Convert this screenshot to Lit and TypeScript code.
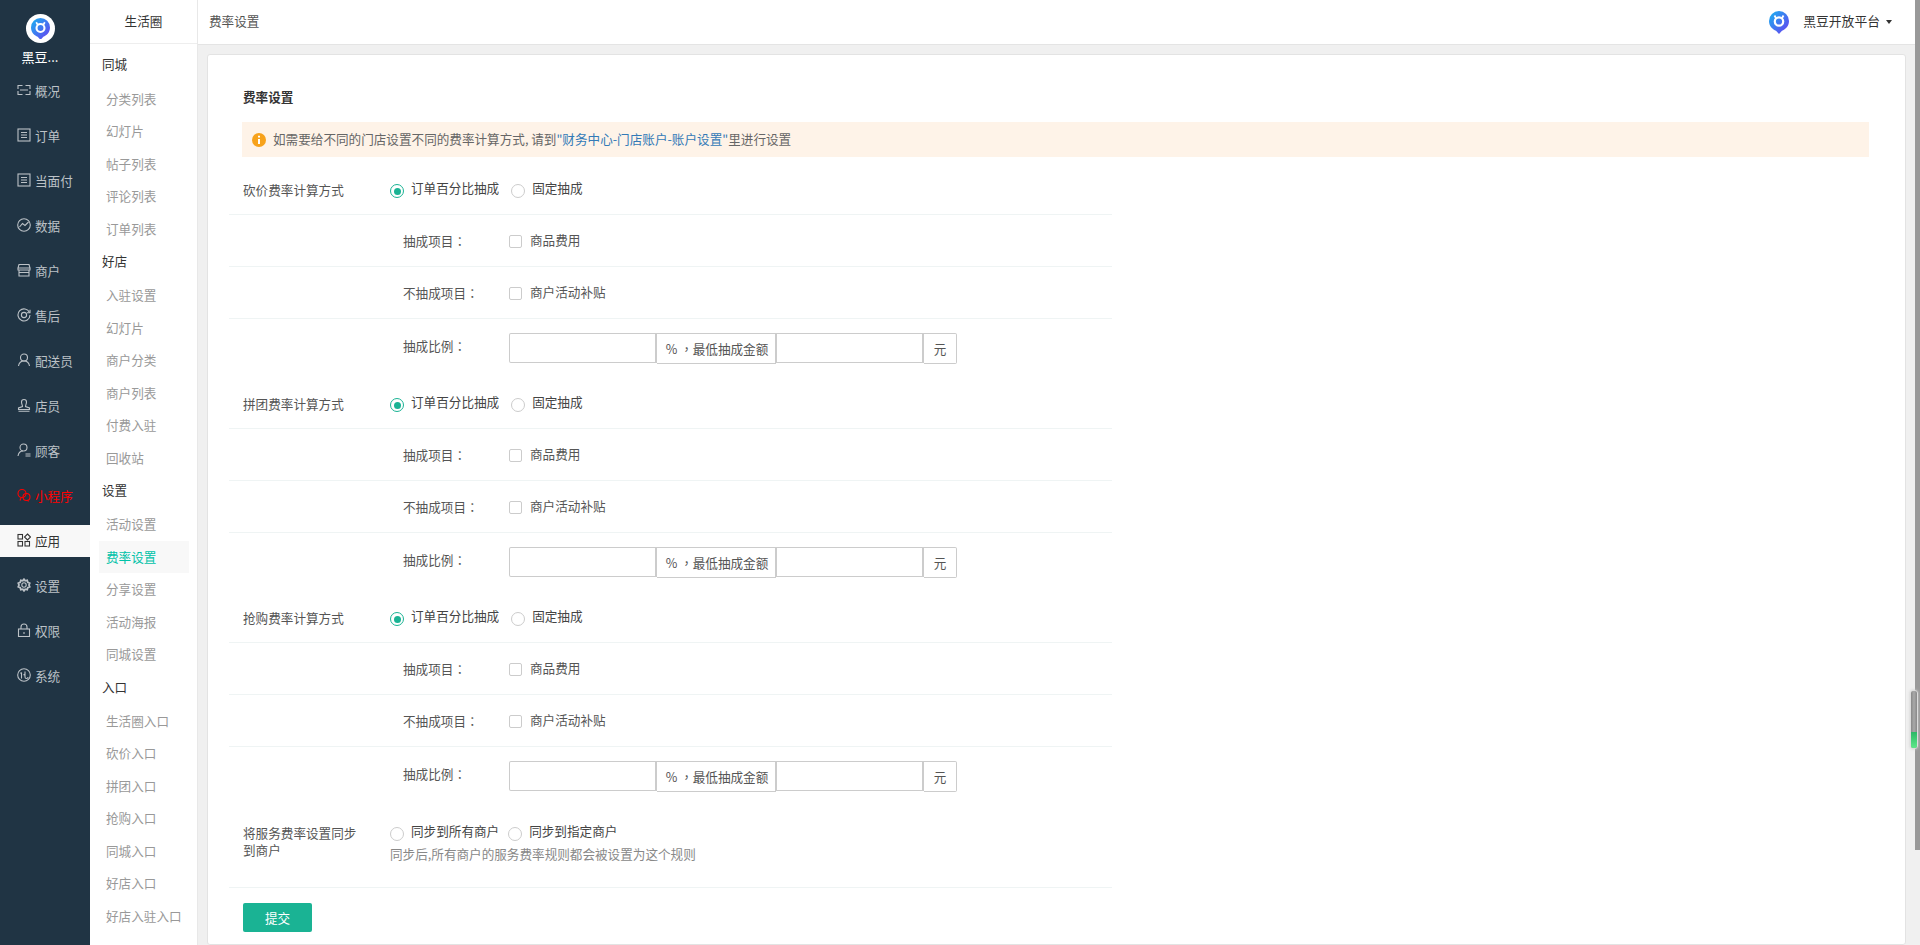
import { LitElement, html, css, svg } from "lit";
import { customElement } from "lit/decorators.js";

const logo = (size: number, id: string) => html`<svg width=${size} height=${size * 1.15} viewBox="0 0 20 23">
  <defs><linearGradient id=${id} x1="0" y1="0" x2="1" y2="1"><stop offset="0" stop-color="#18b4f0"/><stop offset="1" stop-color="#6a3cf0"/></linearGradient></defs>
  <path d="M10 0a10 10 0 0 1 10 10c0 5.4-4 8.600-7 9.800L10 23l-3-3.200C4 18.600 0 15.400 0 10A10 10 0 0 1 10 0z" fill="url(#${id})"/>
  <circle cx="10" cy="10.500" r="4.200" fill="none" stroke="#fff" stroke-width="2.200"/>
  <path d="M5.500 4.500l1.700 3M14.500 4.500l-1.700 3" stroke="#fff" stroke-width="1.800" fill="none"/>
</svg>`;

const ic: Record<string, unknown> = {
  overview: svg`<path d="M1 6V2.500h4.500M8.500 2.500H13V6M1 8v3.500h4.500M8.500 11.500H13V8M3 7h8"/>`,
  list: svg`<rect x="1" y="1" width="12" height="12"/><path d="M4 4.500h6M4 7h6M4 9.500h6"/>`,
  chart: svg`<circle cx="7" cy="7" r="6.300"/><path d="M2.500 9l3-3.500 2.500 2 3.500-3.500"/>`,
  store: svg`<path d="M2 1.500h10l1 3.500H1zM1 5h12v2H1zM2 7v6h10V7M2 9.500h10"/>`,
  after: svg`<path d="M12.500 4.500A6 6 0 1 0 13 7"/><circle cx="7" cy="7" r="2.600"/><path d="M13 1.800v3h-3"/>`,
  person: svg`<circle cx="7" cy="4.500" r="3.500"/><path d="M1.500 13c.5-3 2.500-5 5.500-5s5 2 5.500 5"/>`,
  staff: svg`<path d="M4.500 4a2.500 2.500 0 0 1 5 0c0 2-1 3-1 4.500l4 1.500v1.500h-11V10l4-1.500C5.500 7 4.500 6 4.500 4zM1.500 13.300h11"/>`,
  customer: svg`<circle cx="6.500" cy="4.500" r="3.500"/><path d="M1 13c.5-3 2.500-5 5-5M8.500 11h5M8.500 13h5"/>`,
  mini: svg`<circle cx="5" cy="5.500" r="4"/><circle cx="9.500" cy="9" r="3.500"/><path d="M3 12.500l1-2.500M11.500 13.500l-1-1.500"/>`,
  apps: svg`<rect x="1" y="1.500" width="4.500" height="4.500"/><path d="M10.500 1l3 3-3 3-3-3z"/><rect x="1" y="8.500" width="4.500" height="4.500"/><rect x="8" y="8.500" width="4.500" height="4.500"/>`,
  gear: svg`<circle cx="7" cy="7" r="2.200"/><path stroke-width="1.800" d="M7 1.200l1.200 1.600 2-.4.600 2 1.900.8-.7 1.800.7 1.800-1.900.8-.6 2-2-.4L7 12.800l-1.200-1.600-2 .4-.6-2-1.900-.8.700-1.800-.7-1.800 1.900-.8.600-2 2 .4z"/>`,
  lock: svg`<rect x="1.500" y="6" width="11" height="7.500"/><path d="M4 6V4a3 3 0 0 1 6 0v2M7 9v2"/>`,
  sys: svg`<circle cx="7" cy="7" r="6.300"/><path d="M4.500 4.500v6M3.500 5.500l1-1M8 3.500v5.500a1.500 1.500 0 0 0 3 0M8 6l-1.500 1"/>`,
};

const nav: [string, string, string?][] = [
  ["概况", "overview"], ["订单", "list"], ["当面付", "list"], ["数据", "chart"], ["商户", "store"],
  ["售后", "after"], ["配送员", "person"], ["店员", "staff"], ["顾客", "customer"],
  ["小程序", "mini", "red"], ["应用", "apps", "active"], ["设置", "gear"], ["权限", "lock"], ["系统", "sys"],
];

const sub: [string, string[]][] = [
  ["同城", ["分类列表", "幻灯片", "帖子列表", "评论列表", "订单列表"]],
  ["好店", ["入驻设置", "幻灯片", "商户分类", "商户列表", "付费入驻", "回收站"]],
  ["设置", ["活动设置", "费率设置", "分享设置", "活动海报", "同城设置"]],
  ["入口", ["生活圈入口", "砍价入口", "拼团入口", "抢购入口", "同城入口", "好店入口", "好店入驻入口"]],
];

@customElement("app-root")
export class AppRoot extends LitElement {
  static styles = css`
    :host { display: flex; height: 945px; overflow: hidden; position: relative; background: #f0f0f0;
      font-family: "Noto Sans CJK SC", "Liberation Sans", sans-serif; font-size: 12.600px; color: #555; }
    * { box-sizing: border-box; }
    .p { font-family: "Noto Sans CJK TC", sans-serif; }
    .side { width: 90px; flex: none; background: #203444; display: flex; flex-direction: column; align-items: stretch; }
    .brand { height: 75px; display: flex; flex-direction: column; align-items: center; padding: 14px 10px 0 0; }
    .brand-logo { width: 29px; height: 29px; border-radius: 50%; background: #fff; display: flex; align-items: center; justify-content: center; }
    .brand-name { color: #fff; margin-top: 5px; line-height: 18px; font-size: 13px; white-space: nowrap; }
    .nav { height: 32px; margin-bottom: 13px; display: flex; align-items: center; padding: 0 0 2px 17px; gap: 4px; color: #bcc2c7; white-space: nowrap; }
    .nav svg { width: 14px; height: 14px; flex: none; fill: none; stroke: currentColor; stroke-width: 1.100; }
    .nav.red { color: #f00; }
    .nav.active { background: #f8f8f8; color: #333; }
    .subnav { width: 108px; flex: none; background: #fff; border-right: 1px solid #e8e8e8; }
    .subtitle { height: 44px; line-height: 42px; text-align: center; color: #333; border-bottom: 1px solid #eee; }
    .list { padding-top: 3.500px; }
    .head { height: 34px; line-height: 32px; padding-left: 12px; color: #333; }
    .head:first-child { margin-bottom: 1px; }
    .item { width: 90px; margin-left: 9px; height: 32.500px; line-height: 31px; padding-left: 7px; color: #999; white-space: nowrap; }
    .item.on { color: #00c2a8; background: #f8f8f8; }
    .main { flex: 1; min-width: 0; display: flex; flex-direction: column; }
    .top { height: 45px; flex: none; background: #fff; border-bottom: 1px solid #e4e4e4; display: flex; align-items: center; padding: 0 23px 0 11px; color: #555; }
    .top .crumb { flex: 1; padding-bottom: 4px; }
    .top .user { color: #333; margin-left: 14px; font-size: 12.800px; padding-bottom: 4px; }
    .caret { width: 0; height: 0; border: 3.500px solid transparent; border-top: 4px solid #333; border-bottom: 0; margin-left: 6px; }
    .card { margin: 9px 9px 0 9px; flex: 1; background: #fff; border: 1px solid #e3e3e3; border-radius: 3px; padding: 0 0 0 21px; }
    .title { font-weight: 700; color: #333; margin: 32px 0 0 14px; height: 20px; line-height: 20px; }
    .alert { margin: 15px 36px 0 13px; height: 35px; background: #fef3e8; display: flex; align-items: center; padding-left: 10px; color: #666; gap: 7px; }
    .alert div { padding-bottom: 2px; }
    .alert a { color: #337ab7; }
    .form { width: 883px; margin-top: 8px; }
    .row { display: flex; border-bottom: 1px solid #eff4f4; padding-left: 14px; }
    .row.radio { height: 50px; align-items: center; }
    .row.sub { height: 52px; align-items: center; }
    .row.input { height: 60px; padding-top: 14px; border: 0; }
    .row.input .slabel { padding-top: 3px; }
    .label { width: 147px; flex: none; color: #555; line-height: 16px; }
    .slabel { width: 106px; margin-left: 160px; flex: none; color: #555; }
    .opt { display: inline-flex; align-items: center; }
    .dot { width: 14px; height: 14px; border-radius: 50%; border: 1px solid #ccc; flex: none; margin-top: 3px; background: #fff; }
    .dot.on { border-color: #1ab394; position: relative; }
    .dot.on::after { content: ""; position: absolute; left: 2.500px; top: 2.500px; width: 7px; height: 7px; border-radius: 50%; background: #1ab394; }
    .opt span { margin: -5px 12px 0 7px; color: #444; }
    .sync .opt span { margin-right: 9px; }
    .box { width: 13px; height: 13px; border: 1px solid #ccc; border-radius: 2px; margin: 4px 8px 0 0; flex: none; }
    .chk { display: flex; align-items: center; color: #555; padding-bottom: 2px; }
    .group { display: flex; height: 31px; }
    .in { height: 30px; width: 148px; border: 1px solid #ccc; border-right-width: 2px; border-radius: 2px 0 0 2px; background: #fff; }
    .in.two { border-radius: 0; }
    .add { height: 31px; border: 1px solid #ccc; border-left: 0; display: flex; align-items: center; justify-content: center; color: #555; white-space: nowrap; }
    .add.a { width: 119px; padding-left: 2px; }
    .add.b { width: 33px; border-radius: 0 2px 2px 0; }
    .sync { height: 81px; display: flex; padding: 17px 0 0 14px; border-bottom: 1px solid #eff4f4; }
    .sync .label { width: 147px; padding-right: 30px; line-height: 17px; }
    .help { color: #888; margin-top: 0; line-height: 18px; }
    .btn { margin: 15px 0 0 14px; width: 69px; height: 29px; background: #1ab394; border-radius: 2px; color: #fff; display: flex; align-items: center; justify-content: center; }
    .bar { width: 5px; flex: none; }
    .thumb { height: 850px; background: #999; }
    .widget { position: absolute; left: 1910px; top: 690px; width: 8px; height: 59px; border: 1px solid #ddd; border-radius: 3px; background: linear-gradient(90deg, #888, #aaa 50%, #888); overflow: hidden; box-shadow: 0 0 3px #ccc; }
    .widget i { position: absolute; left: 0; right: 0; bottom: 0; height: 16px; background: linear-gradient(#2cb866, #5fe88a); }
  `;

  section(name: string) {
    return html`
      <div class="row radio">
        <div class="label">${name}费率计算方式</div>
        <label class="opt"><i class="dot on"></i><span>订单百分比抽成</span></label>
        <label class="opt"><i class="dot"></i><span>固定抽成</span></label>
      </div>
      <div class="row sub"><div class="slabel">抽成项目<span class="p">：</span></div><div class="chk"><i class="box"></i>商品费用</div></div>
      <div class="row sub"><div class="slabel">不抽成项目<span class="p">：</span></div><div class="chk"><i class="box"></i>商户活动补贴</div></div>
      <div class="row input"><div class="slabel">抽成比例<span class="p">：</span></div>
        <div class="group"><div class="in"></div><div class="add a"><span>%&nbsp;<span class="p">，</span>最低抽成金额</span></div><div class="in two"></div><div class="add b">元</div></div>
      </div>`;
  }

  render() {
    return html`
      <aside class="side">
        <div class="brand"><div class="brand-logo">${logo(19, "g1")}</div><div class="brand-name">黑豆...</div></div>
        ${nav.map(([t, i, c]) => html`<div class="nav ${c ?? ""}"><svg viewBox="0 0 14 14">${ic[i]}</svg>${t}</div>`)}
      </aside>
      <nav class="subnav">
        <div class="subtitle">生活圈</div>
        <div class="list">
        ${sub.map(([h, items]) => html`<div class="head">${h}</div>${items.map((t) => html`<div class="item ${t === "费率设置" ? "on" : ""}">${t}</div>`)}`)}
        </div>
      </nav>
      <div class="main">
        <header class="top">
          <div class="crumb">费率设置</div>
          ${logo(20, "g2")}
          <div class="user">黑豆开放平台</div><i class="caret"></i>
        </header>
        <div class="card">
          <div class="title">费率设置</div>
          <div class="alert">
            <svg width="14" height="14" viewBox="0 0 14 14"><circle cx="7" cy="7" r="7" fill="#f7a21b"/><path d="M7 2.800v1.800M7 6v5" stroke="#fff" stroke-width="2"/></svg>
            <div>如需要给不同的门店设置不同的费率计算方式, 请到<a>"财务中心-门店账户-账户设置"</a>里进行设置</div>
          </div>
          <div class="form">
            ${this.section("砍价")}${this.section("拼团")}${this.section("抢购")}
            <div class="sync">
              <div class="label">将服务费率设置同步到商户</div>
              <div>
                <label class="opt"><i class="dot"></i><span>同步到所有商户</span></label><label class="opt"><i class="dot"></i><span>同步到指定商户</span></label>
                <div class="help">同步后,所有商户的服务费率规则都会被设置为这个规则</div>
              </div>
            </div>
            <div class="btn">提交</div>
          </div>
        </div>
      </div>
      <div class="bar"><div class="thumb"></div></div>
      <div class="widget"><i></i></div>
    `;
  }
}
